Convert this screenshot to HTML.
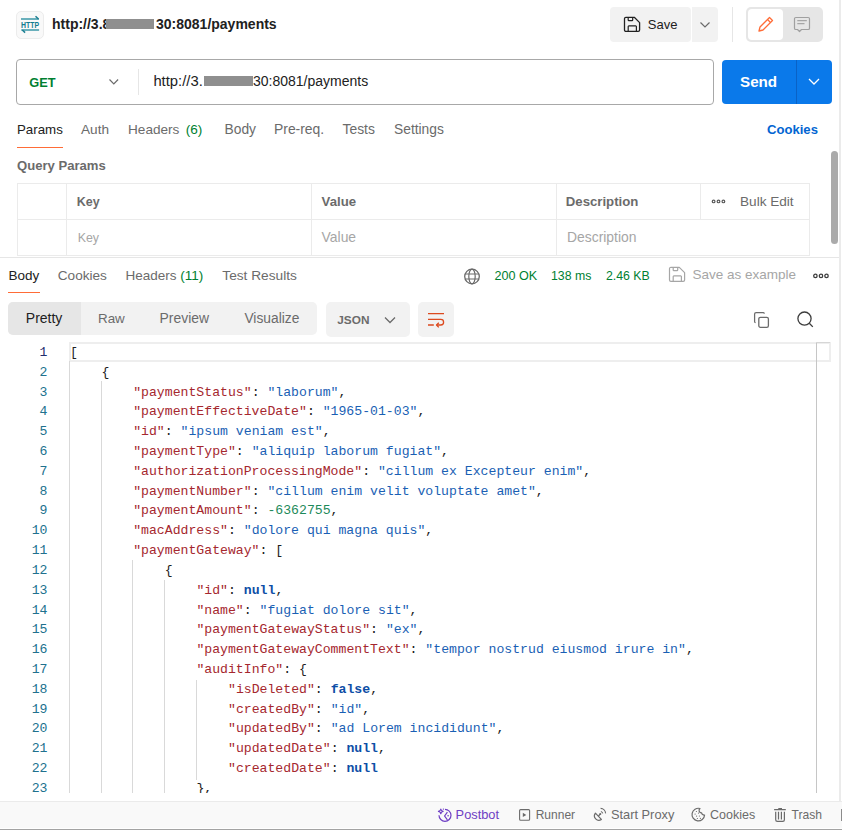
<!DOCTYPE html>
<html><head><meta charset="utf-8">
<style>
*{box-sizing:border-box;margin:0;padding:0}
html,body{width:842px;height:830px;overflow:hidden;background:#fff;font-family:"Liberation Sans",sans-serif;color:#212121;position:relative}
.a{position:absolute;white-space:nowrap}
.mono{font-family:"Liberation Mono",monospace}
svg.a{overflow:visible}
</style></head><body>
<div class="a" style="left:839px;top:0px;width:2px;height:801px;background:#ebebeb"></div>
<div class="a" style="left:16px;top:10.5px;width:28px;height:28px;border-radius:5px;background:#f9f9f9;border:1px solid #ececec"></div>
<svg class="a" style="left:16px;top:10px" width="28" height="28" viewBox="16 10 28 28" fill="none"><path d="M21 19h18" stroke="#62acb9" stroke-width="1.9"/><path d="M35.5 16.2l3 2.8" stroke="#1d7f92" stroke-width="1.5"/>
<path d="M21.3 30h17.8" stroke="#62acb9" stroke-width="1.9"/><path d="M22.3 30l2.8 2.6" stroke="#1d7f92" stroke-width="1.5"/>
<text x="21" y="27.8" font-family="Liberation Sans" font-weight="bold" font-size="9.4" fill="#137c90" textLength="18" lengthAdjust="spacingAndGlyphs">HTTP</text></svg>
<div class="a" style="left:52.00px;top:17.01px;font-size:14px;line-height:14px;color:#212121;font-weight:bold;">http://3.8</div>
<div class="a" style="left:106px;top:19px;width:48px;height:10px;background:#8f8f8f"></div>
<div class="a" style="left:156.00px;top:17.01px;font-size:14px;line-height:14px;color:#212121;font-weight:bold;">30:8081/payments</div>
<div class="a" style="left:610px;top:7px;width:81px;height:35px;background:#f2f2f2;border-radius:4px"></div>
<svg class="a" style="left:624px;top:16px" width="17" height="17" viewBox="0 0 17 17" fill="none"><path d="M2 1.3H10.3L15.6 6.6V14A1.4 1.4 0 0 1 14.2 15.4H1.9A1.4 1.4 0 0 1 .5 14V2.7A1.4 1.4 0 0 1 2 1.3z" stroke="#212121" stroke-width="1.3" stroke-linejoin="round"/><path d="M4.2 1.3V4A.7.7 0 0 0 4.9 4.7H8A.7.7 0 0 0 8.7 4V1.3M4.2 15.4V10.6A.7.7 0 0 1 4.9 9.9H11.7A.7.7 0 0 1 12.4 10.6V15.4" stroke="#212121" stroke-width="1.2"/></svg>
<div class="a" style="left:647.80px;top:18.01px;font-size:13px;line-height:13px;color:#212121;">Save</div>
<div class="a" style="left:692px;top:7px;width:26px;height:35px;background:#f2f2f2;border-radius:0 4px 4px 0"></div>
<svg class="a" style="left:699px;top:20px" width="12" height="9" viewBox="0 0 12 9" fill="none"><path d="M1.5 2.5l4.5 4.5 4.5-4.5" stroke="#6b6b6b" stroke-width="1.2"/></svg>
<div class="a" style="left:732px;top:7px;width:1px;height:35px;background:#e6e6e6"></div>
<div class="a" style="left:746px;top:7px;width:77px;height:35px;background:#e6e6e6;border-radius:5px"></div>
<div class="a" style="left:748px;top:9px;width:35px;height:31px;background:#fff;border-radius:4px"></div>
<svg class="a" style="left:757px;top:16px" width="17" height="17" viewBox="0 0 17 17" fill="none"><path d="M2 15l1-4L12.5 1.5l3 3L6 14z" stroke="#ff6c37" stroke-width="1.3" stroke-linejoin="round"/><path d="M10.5 3.5l3 3" stroke="#ff6c37" stroke-width="1.3"/></svg>
<svg class="a" style="left:793px;top:16px" width="18" height="17" viewBox="0 0 18 17" fill="none"><path d="M2.8 1.5h12.4a1.3 1.3 0 0 1 1.3 1.3v9.4a1.3 1.3 0 0 1-1.3 1.3H8.5l-2 2-2-2H2.8a1.3 1.3 0 0 1-1.3-1.3V2.8a1.3 1.3 0 0 1 1.3-1.3z" stroke="#a0a0a0" stroke-width="1.2" stroke-linejoin="round"/><path d="M4.3 4.7h9.5M4.3 7.7h7.2" stroke="#a6a6a6" stroke-width="1.3"/></svg>
<div class="a" style="left:16px;top:59px;width:698px;height:46px;border:1px solid #a8a8a8;border-radius:4px"></div>
<div class="a" style="left:29.20px;top:77.01px;font-size:12.8px;line-height:12.8px;color:#007f31;font-weight:bold;">GET</div>
<svg class="a" style="left:107.5px;top:77.5px" width="13" height="9" viewBox="0 0 13 9" fill="none"><path d="M1.5 1.5l4.3 4.3 4.3-4.3" stroke="#6b6b6b" stroke-width="1.2"/></svg>
<div class="a" style="left:138px;top:68.5px;width:1px;height:26px;background:#e6e6e6"></div>
<div class="a" style="left:153.40px;top:74.00px;font-size:14.8px;line-height:14.8px;color:#212121;">http://3.</div>
<div class="a" style="left:204px;top:76.2px;width:49px;height:10.3px;background:#8f8f8f"></div>
<div class="a" style="left:253.00px;top:74.01px;font-size:14px;line-height:14px;color:#212121;">30:8081/payments</div>
<div class="a" style="left:722px;top:60px;width:110px;height:44px;background:#0a79ea;border-radius:4px"></div>
<div class="a" style="left:796px;top:60px;width:1px;height:44px;background:#0a62c6"></div>
<div class="a" style="left:740.00px;top:74.01px;font-size:15.2px;line-height:15.2px;color:#ffffff;font-weight:bold;">Send</div>
<svg class="a" style="left:808px;top:78px" width="12" height="7" viewBox="0 0 12 7" fill="none"><path d="M1 1l5 5 5-5" stroke="#ffffff" stroke-width="1.3"/></svg>
<div class="a" style="left:17.00px;top:123.00px;font-size:13.3px;line-height:13.3px;color:#212121;">Params</div>
<div class="a" style="left:17px;top:146.5px;width:46px;height:1.6px;background:#ff6c37"></div>
<div class="a" style="left:81.00px;top:123.00px;font-size:13.6px;line-height:13.6px;color:#6b6b6b;">Auth</div>
<div class="a" style="left:128.00px;top:123.00px;font-size:13.6px;line-height:13.6px;color:#6b6b6b;">Headers <span style="color:#007f31;margin-left:2.5px">(6)</span></div>
<div class="a" style="left:224.50px;top:123.00px;font-size:13.8px;line-height:13.8px;color:#6b6b6b;">Body</div>
<div class="a" style="left:274.00px;top:123.01px;font-size:13.9px;line-height:13.9px;color:#6b6b6b;">Pre-req.</div>
<div class="a" style="left:342.50px;top:123.01px;font-size:13.9px;line-height:13.9px;color:#6b6b6b;">Tests</div>
<div class="a" style="left:394.00px;top:123.00px;font-size:13.8px;line-height:13.8px;color:#6b6b6b;">Settings</div>
<div class="a" style="left:767.00px;top:123.00px;font-size:13.1px;line-height:13.1px;color:#0265d2;font-weight:bold;">Cookies</div>
<div class="a" style="left:17.00px;top:159.01px;font-size:13.1px;line-height:13.1px;color:#6b6b6b;font-weight:bold;">Query Params</div>
<div class="a" style="left:17px;top:183px;width:793px;height:73px;border:1px solid #ebebeb"></div>
<div class="a" style="left:17px;top:219px;width:793px;height:1px;background:#ebebeb"></div>
<div class="a" style="left:66px;top:183px;width:1px;height:73px;background:#ebebeb"></div>
<div class="a" style="left:311px;top:183px;width:1px;height:73px;background:#ebebeb"></div>
<div class="a" style="left:556px;top:183px;width:1px;height:73px;background:#ebebeb"></div>
<div class="a" style="left:700px;top:183px;width:1px;height:36px;background:#ebebeb"></div>
<div class="a" style="left:76.70px;top:196.00px;font-size:12.5px;line-height:12.5px;color:#6b6b6b;font-weight:bold;">Key</div>
<div class="a" style="left:321.60px;top:195.00px;font-size:13.2px;line-height:13.2px;color:#6b6b6b;font-weight:bold;">Value</div>
<div class="a" style="left:565.80px;top:195.00px;font-size:13.2px;line-height:13.2px;color:#6b6b6b;font-weight:bold;">Description</div>
<svg class="a" style="left:706px;top:192px" width="26" height="18" viewBox="0 0 26 18" fill="none"><circle cx="7.6" cy="9.4" r="1.35" stroke="#5a5a5a" stroke-width="1.2"/><circle cx="12.5" cy="9.4" r="1.35" stroke="#5a5a5a" stroke-width="1.2"/><circle cx="17.4" cy="9.4" r="1.35" stroke="#5a5a5a" stroke-width="1.2"/></svg>
<div class="a" style="left:740.00px;top:195.01px;font-size:13.6px;line-height:13.6px;color:#6b6b6b;">Bulk Edit</div>
<div class="a" style="left:77.70px;top:232.00px;font-size:12.4px;line-height:12.4px;color:#a6a6a6;">Key</div>
<div class="a" style="left:321.60px;top:231.01px;font-size:13.9px;line-height:13.9px;color:#a6a6a6;">Value</div>
<div class="a" style="left:567.00px;top:231.01px;font-size:13.9px;line-height:13.9px;color:#a6a6a6;">Description</div>
<div class="a" style="left:830.5px;top:151px;width:7px;height:93px;background:#aaaaaa;border-radius:4px"></div>
<div class="a" style="left:0px;top:257px;width:839px;height:1px;background:#e6e6e6"></div>
<div class="a" style="left:8.40px;top:269.00px;font-size:13.5px;line-height:13.5px;color:#212121;">Body</div>
<div class="a" style="left:8px;top:291.8px;width:32px;height:1.6px;background:#ff6c37"></div>
<div class="a" style="left:57.80px;top:269.01px;font-size:13.6px;line-height:13.6px;color:#6b6b6b;">Cookies</div>
<div class="a" style="left:125.40px;top:269.00px;font-size:13.5px;line-height:13.5px;color:#6b6b6b;">Headers <span style="color:#007f31">(11)</span></div>
<div class="a" style="left:222.30px;top:269.00px;font-size:13.7px;line-height:13.7px;color:#6b6b6b;">Test Results</div>
<svg class="a" style="left:463px;top:268px" width="18" height="17" viewBox="0 0 18 17" fill="none"><circle cx="9" cy="8.5" r="7.3" stroke="#6b6b6b" stroke-width="1.3"/><ellipse cx="9" cy="8.5" rx="3.2" ry="7.3" stroke="#6b6b6b" stroke-width="1.2"/><path d="M2 6h14M2 11h14" stroke="#6b6b6b" stroke-width="1.2"/></svg>
<div class="a" style="left:494.40px;top:270.00px;font-size:12.6px;line-height:12.6px;color:#007f31;">200 OK</div>
<div class="a" style="left:551.00px;top:270.01px;font-size:12.3px;line-height:12.3px;color:#007f31;">138 ms</div>
<div class="a" style="left:605.90px;top:270.01px;font-size:12.3px;line-height:12.3px;color:#007f31;">2.46 KB</div>
<svg class="a" style="left:669px;top:266px" width="17" height="17" viewBox="0 0 17 17" fill="none"><path d="M2 1.3H10.3L15.6 6.6V14A1.4 1.4 0 0 1 14.2 15.4H1.9A1.4 1.4 0 0 1 .5 14V2.7A1.4 1.4 0 0 1 2 1.3z" stroke="#a6a6a6" stroke-width="1.2" stroke-linejoin="round"/><path d="M4.2 1.3V4A.7.7 0 0 0 4.9 4.7H8A.7.7 0 0 0 8.7 4V1.3M4.2 15.4V10.6A.7.7 0 0 1 4.9 9.9H11.7A.7.7 0 0 1 12.4 10.6V15.4" stroke="#a6a6a6" stroke-width="1.2"/></svg>
<div class="a" style="left:692.40px;top:268.01px;font-size:13.5px;line-height:13.5px;color:#a6a6a6;">Save as example</div>
<svg class="a" style="left:808px;top:266px" width="26" height="18" viewBox="0 0 26 18" fill="none"><circle cx="7.4" cy="9.9" r="1.7" stroke="#3d3d3d" stroke-width="1.3"/><circle cx="13" cy="9.9" r="1.7" stroke="#3d3d3d" stroke-width="1.3"/><circle cx="18.5" cy="9.9" r="1.7" stroke="#3d3d3d" stroke-width="1.3"/></svg>
<div class="a" style="left:8px;top:302px;width:309px;height:33px;background:#f2f2f2;border-radius:5px"></div>
<div class="a" style="left:8px;top:302px;width:73px;height:33px;background:#e6e6e6;border-radius:5px 0 0 5px"></div>
<div class="a" style="left:25.80px;top:311.00px;font-size:14px;line-height:14px;color:#212121;">Pretty</div>
<div class="a" style="left:98.00px;top:312.01px;font-size:13.4px;line-height:13.4px;color:#6b6b6b;">Raw</div>
<div class="a" style="left:159.60px;top:312.01px;font-size:13.9px;line-height:13.9px;color:#6b6b6b;">Preview</div>
<div class="a" style="left:244.40px;top:312.00px;font-size:13.8px;line-height:13.8px;color:#6b6b6b;">Visualize</div>
<div class="a" style="left:326px;top:302px;width:84px;height:35px;background:#f2f2f2;border-radius:5px"></div>
<div class="a" style="left:337.30px;top:315.01px;font-size:11.8px;line-height:11.8px;color:#6b6b6b;font-weight:bold;">JSON</div>
<svg class="a" style="left:384px;top:316px" width="12" height="9" viewBox="0 0 12 9" fill="none"><path d="M1 1.5l5 5 5-5" stroke="#6b6b6b" stroke-width="1.3"/></svg>
<div class="a" style="left:418px;top:302px;width:36px;height:35px;background:#f2f2f2;border-radius:5px"></div>
<svg class="a" style="left:426px;top:311px" width="20" height="18" viewBox="0 0 20 18" fill="none"><path d="M2 2.7h16M2 14h5.8" stroke="#dc4a1f" stroke-width="1.3"/><path d="M2 8.4h12.8a2.8 2.8 0 0 1 0 5.6H10.8" stroke="#dc4a1f" stroke-width="1.3"/><path d="M12.8 11.7L10.5 14L12.8 16.4" stroke="#dc4a1f" stroke-width="1.3" stroke-linejoin="round"/></svg>
<svg class="a" style="left:753px;top:312px" width="17" height="17" viewBox="0 0 17 17" fill="none"><path d="M2.6 10.6A1.2 1.2 0 0 1 1.6 9.4V2.1A1.5 1.5 0 0 1 3.1 0.6H10.3A1.3 1.3 0 0 1 11.4 1.7" stroke="#6b6b6b" stroke-width="1.25"/><rect x="5.8" y="5.3" width="9.6" height="10" rx="1.6" stroke="#6b6b6b" stroke-width="1.3"/></svg>
<svg class="a" style="left:796px;top:310px" width="18" height="19" viewBox="0 0 18 19" fill="none"><circle cx="8.5" cy="8.6" r="6.6" stroke="#3d3d3d" stroke-width="1.3"/><path d="M13.3 13.3l3.5 3.6" stroke="#3d3d3d" stroke-width="1.3"/></svg>
<div class="a" style="left:69px;top:342px;width:762px;height:20px;border:2px solid #eeeeee"></div>
<div class="a" style="left:816px;top:342px;width:1px;height:451px;background:#c6c6c6"></div>
<div class="a" style="left:816px;top:342px;width:14px;height:1px;background:#d6d6d6"></div>
<div class="a" style="left:69px;top:361px;width:1px;height:432px;background:#d9d9d9"></div>
<div class="a" style="left:101px;top:381px;width:1px;height:412px;background:#d9d9d9"></div>
<div class="a" style="left:132px;top:560px;width:1px;height:233px;background:#d9d9d9"></div>
<div class="a" style="left:164px;top:580px;width:1px;height:213px;background:#d9d9d9"></div>
<div class="a" style="left:196px;top:680px;width:1px;height:100px;background:#d9d9d9"></div>
<div class="a" style="left:0;top:343px;width:816px;height:450px;overflow:hidden">
<div class="a mono" style="left:0;top:-0.01px;width:47.5px;text-align:right;font-size:13.17px;line-height:19.81px;color:#1f2d6e">1</div>
<div class="a mono" style="left:70.00px;top:-0.01px;font-size:13.17px;line-height:19.81px;color:#212121">[</div>
<div class="a mono" style="left:0;top:19.80px;width:47.5px;text-align:right;font-size:13.17px;line-height:19.81px;color:#20718e">2</div>
<div class="a mono" style="left:101.60px;top:19.80px;font-size:13.17px;line-height:19.81px;color:#212121">{</div>
<div class="a mono" style="left:0;top:39.61px;width:47.5px;text-align:right;font-size:13.17px;line-height:19.81px;color:#20718e">3</div>
<div class="a mono" style="left:133.20px;top:39.61px;font-size:13.17px;line-height:19.81px;color:#212121"><span style="color:#a5272e">"paymentStatus"</span>: <span style="color:#1a5fb4">"laborum"</span>,</div>
<div class="a mono" style="left:0;top:59.42px;width:47.5px;text-align:right;font-size:13.17px;line-height:19.81px;color:#20718e">4</div>
<div class="a mono" style="left:133.20px;top:59.42px;font-size:13.17px;line-height:19.81px;color:#212121"><span style="color:#a5272e">"paymentEffectiveDate"</span>: <span style="color:#1a5fb4">"1965-01-03"</span>,</div>
<div class="a mono" style="left:0;top:79.23px;width:47.5px;text-align:right;font-size:13.17px;line-height:19.81px;color:#20718e">5</div>
<div class="a mono" style="left:133.20px;top:79.23px;font-size:13.17px;line-height:19.81px;color:#212121"><span style="color:#a5272e">"id"</span>: <span style="color:#1a5fb4">"ipsum veniam est"</span>,</div>
<div class="a mono" style="left:0;top:99.04px;width:47.5px;text-align:right;font-size:13.17px;line-height:19.81px;color:#20718e">6</div>
<div class="a mono" style="left:133.20px;top:99.04px;font-size:13.17px;line-height:19.81px;color:#212121"><span style="color:#a5272e">"paymentType"</span>: <span style="color:#1a5fb4">"aliquip laborum fugiat"</span>,</div>
<div class="a mono" style="left:0;top:118.85px;width:47.5px;text-align:right;font-size:13.17px;line-height:19.81px;color:#20718e">7</div>
<div class="a mono" style="left:133.20px;top:118.85px;font-size:13.17px;line-height:19.81px;color:#212121"><span style="color:#a5272e">"authorizationProcessingMode"</span>: <span style="color:#1a5fb4">"cillum ex Excepteur enim"</span>,</div>
<div class="a mono" style="left:0;top:138.66px;width:47.5px;text-align:right;font-size:13.17px;line-height:19.81px;color:#20718e">8</div>
<div class="a mono" style="left:133.20px;top:138.66px;font-size:13.17px;line-height:19.81px;color:#212121"><span style="color:#a5272e">"paymentNumber"</span>: <span style="color:#1a5fb4">"cillum enim velit voluptate amet"</span>,</div>
<div class="a mono" style="left:0;top:158.47px;width:47.5px;text-align:right;font-size:13.17px;line-height:19.81px;color:#20718e">9</div>
<div class="a mono" style="left:133.20px;top:158.47px;font-size:13.17px;line-height:19.81px;color:#212121"><span style="color:#a5272e">"paymentAmount"</span>: <span style="color:#1d8a5a">-6362755</span>,</div>
<div class="a mono" style="left:0;top:178.28px;width:47.5px;text-align:right;font-size:13.17px;line-height:19.81px;color:#20718e">10</div>
<div class="a mono" style="left:133.20px;top:178.28px;font-size:13.17px;line-height:19.81px;color:#212121"><span style="color:#a5272e">"macAddress"</span>: <span style="color:#1a5fb4">"dolore qui magna quis"</span>,</div>
<div class="a mono" style="left:0;top:198.09px;width:47.5px;text-align:right;font-size:13.17px;line-height:19.81px;color:#20718e">11</div>
<div class="a mono" style="left:133.20px;top:198.09px;font-size:13.17px;line-height:19.81px;color:#212121"><span style="color:#a5272e">"paymentGateway"</span>: [</div>
<div class="a mono" style="left:0;top:217.90px;width:47.5px;text-align:right;font-size:13.17px;line-height:19.81px;color:#20718e">12</div>
<div class="a mono" style="left:164.80px;top:217.90px;font-size:13.17px;line-height:19.81px;color:#212121">{</div>
<div class="a mono" style="left:0;top:237.71px;width:47.5px;text-align:right;font-size:13.17px;line-height:19.81px;color:#20718e">13</div>
<div class="a mono" style="left:196.40px;top:237.71px;font-size:13.17px;line-height:19.81px;color:#212121"><span style="color:#a5272e">"id"</span>: <span style="color:#0d4ea6;font-weight:bold">null</span>,</div>
<div class="a mono" style="left:0;top:257.52px;width:47.5px;text-align:right;font-size:13.17px;line-height:19.81px;color:#20718e">14</div>
<div class="a mono" style="left:196.40px;top:257.52px;font-size:13.17px;line-height:19.81px;color:#212121"><span style="color:#a5272e">"name"</span>: <span style="color:#1a5fb4">"fugiat dolore sit"</span>,</div>
<div class="a mono" style="left:0;top:277.33px;width:47.5px;text-align:right;font-size:13.17px;line-height:19.81px;color:#20718e">15</div>
<div class="a mono" style="left:196.40px;top:277.33px;font-size:13.17px;line-height:19.81px;color:#212121"><span style="color:#a5272e">"paymentGatewayStatus"</span>: <span style="color:#1a5fb4">"ex"</span>,</div>
<div class="a mono" style="left:0;top:297.14px;width:47.5px;text-align:right;font-size:13.17px;line-height:19.81px;color:#20718e">16</div>
<div class="a mono" style="left:196.40px;top:297.14px;font-size:13.17px;line-height:19.81px;color:#212121"><span style="color:#a5272e">"paymentGatewayCommentText"</span>: <span style="color:#1a5fb4">"tempor nostrud eiusmod irure in"</span>,</div>
<div class="a mono" style="left:0;top:316.95px;width:47.5px;text-align:right;font-size:13.17px;line-height:19.81px;color:#20718e">17</div>
<div class="a mono" style="left:196.40px;top:316.95px;font-size:13.17px;line-height:19.81px;color:#212121"><span style="color:#a5272e">"auditInfo"</span>: {</div>
<div class="a mono" style="left:0;top:336.76px;width:47.5px;text-align:right;font-size:13.17px;line-height:19.81px;color:#20718e">18</div>
<div class="a mono" style="left:228.00px;top:336.76px;font-size:13.17px;line-height:19.81px;color:#212121"><span style="color:#a5272e">"isDeleted"</span>: <span style="color:#0d4ea6;font-weight:bold">false</span>,</div>
<div class="a mono" style="left:0;top:356.57px;width:47.5px;text-align:right;font-size:13.17px;line-height:19.81px;color:#20718e">19</div>
<div class="a mono" style="left:228.00px;top:356.57px;font-size:13.17px;line-height:19.81px;color:#212121"><span style="color:#a5272e">"createdBy"</span>: <span style="color:#1a5fb4">"id"</span>,</div>
<div class="a mono" style="left:0;top:376.38px;width:47.5px;text-align:right;font-size:13.17px;line-height:19.81px;color:#20718e">20</div>
<div class="a mono" style="left:228.00px;top:376.38px;font-size:13.17px;line-height:19.81px;color:#212121"><span style="color:#a5272e">"updatedBy"</span>: <span style="color:#1a5fb4">"ad Lorem incididunt"</span>,</div>
<div class="a mono" style="left:0;top:396.19px;width:47.5px;text-align:right;font-size:13.17px;line-height:19.81px;color:#20718e">21</div>
<div class="a mono" style="left:228.00px;top:396.19px;font-size:13.17px;line-height:19.81px;color:#212121"><span style="color:#a5272e">"updatedDate"</span>: <span style="color:#0d4ea6;font-weight:bold">null</span>,</div>
<div class="a mono" style="left:0;top:416.00px;width:47.5px;text-align:right;font-size:13.17px;line-height:19.81px;color:#20718e">22</div>
<div class="a mono" style="left:228.00px;top:416.00px;font-size:13.17px;line-height:19.81px;color:#212121"><span style="color:#a5272e">"createdDate"</span>: <span style="color:#0d4ea6;font-weight:bold">null</span></div>
<div class="a mono" style="left:0;top:435.81px;width:47.5px;text-align:right;font-size:13.17px;line-height:19.81px;color:#20718e">23</div>
<div class="a mono" style="left:196.40px;top:435.81px;font-size:13.17px;line-height:19.81px;color:#212121">},</div>
</div>
<div class="a" style="left:0px;top:801px;width:842px;height:27px;background:#f9f9f9;border-top:1px solid #ebebeb"></div>
<div class="a" style="left:0px;top:829px;width:842px;height:1px;background:#a3a3a3"></div>
<svg class="a" style="left:434px;top:804px" width="24" height="22" viewBox="0 0 24 22" fill="none"><path d="M11 5.3A6 6 0 1 1 5 11.3" stroke="#6e3ec4" stroke-width="1.2"/><path d="M6.8 5Q7.1 7.1 9.2 7.4Q7.1 7.7 6.8 9.8Q6.5 7.7 4.4 7.4Q6.5 7.1 6.8 5z" stroke="#6e3ec4" stroke-width="1.1" stroke-linejoin="round"/><circle cx="9.4" cy="5.1" r=".7" fill="#6e3ec4"/><path d="M13.4 8.2L10.6 12L13.4 15.8" stroke="#6e3ec4" stroke-width="1.2"/><circle cx="14.1" cy="11.7" r=".8" fill="#6e3ec4"/></svg>
<div class="a" style="left:455.60px;top:809.00px;font-size:12.8px;line-height:12.8px;color:#6e3ec4;">Postbot</div>
<svg class="a" style="left:514px;top:804px" width="24" height="22" viewBox="0 0 24 22" fill="none"><rect x="5.6" y="5.6" width="10" height="10.6" rx="1" stroke="#6b6b6b" stroke-width="1.1"/><path d="M8.8 8.8L12.3 10.9L8.8 13z" fill="#6b6b6b"/></svg>
<div class="a" style="left:535.70px;top:809.01px;font-size:12px;line-height:12px;color:#6b6b6b;">Runner</div>
<svg class="a" style="left:590px;top:804px" width="24" height="22" viewBox="0 0 24 22" fill="none"><path d="M11.4 15.4A4.4 4.4 0 0 1 5.4 9.1z" stroke="#6b6b6b" stroke-width="1.2" stroke-linejoin="round"/><path d="M8.4 12.2L10.3 10" stroke="#6b6b6b" stroke-width="1.2"/><circle cx="10.3" cy="10" r="1" fill="#6b6b6b"/><path d="M10.9 7.4A3 3 0 0 1 12.8 9.4M10.6 4.4A5.3 5.3 0 0 1 15.6 9.4" stroke="#6b6b6b" stroke-width="1.1"/></svg>
<div class="a" style="left:611.00px;top:809.00px;font-size:12.8px;line-height:12.8px;color:#6b6b6b;">Start Proxy</div>
<svg class="a" style="left:688px;top:804px" width="24" height="22" viewBox="0 0 24 22" fill="none"><path d="M12 4.5A6.3 6.3 0 1 0 16.6 11A2.6 2.6 0 0 1 13.6 8.8A2.4 2.4 0 0 1 12 4.5z" stroke="#6b6b6b" stroke-width="1.2" stroke-linejoin="round"/><circle cx="8.4" cy="7.5" r=".6" fill="#6b6b6b"/><circle cx="10.5" cy="9.1" r=".6" fill="#6b6b6b"/><circle cx="7.1" cy="10.1" r=".6" fill="#6b6b6b"/><circle cx="8.6" cy="12.1" r=".6" fill="#6b6b6b"/><circle cx="11.4" cy="12" r=".6" fill="#6b6b6b"/><circle cx="9.4" cy="14.5" r=".6" fill="#6b6b6b"/><circle cx="12.4" cy="14.3" r=".6" fill="#6b6b6b"/></svg>
<div class="a" style="left:710.00px;top:809.00px;font-size:12.5px;line-height:12.5px;color:#6b6b6b;">Cookies</div>
<svg class="a" style="left:768px;top:804px" width="24" height="22" viewBox="0 0 24 22" fill="none"><path d="M7.7 7.7V15.8Q7.7 17.4 9.3 17.4H14.8Q16.4 17.4 16.4 15.8V7.7M6.1 5.6H17.8M10.3 4.6H14M10.5 7.7V15.4M13.4 7.7V15.4" stroke="#6b6b6b" stroke-width="1.2"/></svg>
<div class="a" style="left:791.60px;top:809.00px;font-size:12.1px;line-height:12.1px;color:#6b6b6b;">Trash</div>
<div class="a" style="left:841px;top:809px;width:1px;height:12px;background:#8c8c8c"></div>
</body></html>
